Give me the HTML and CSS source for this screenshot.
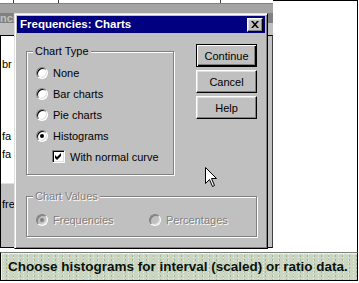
FILE: index.html
```html
<!DOCTYPE html>
<html lang="en">
<head>
    <meta charset="UTF-8">
    <meta name="viewport" content="width=device-width, initial-scale=1.0">
    <title>Frequencies: Charts</title>
    <link rel="stylesheet" href="styles.css">
</head>
<body>
    <div class="screen">
        <div class="desk">
            <div class="datawin">
                <div class="dw-ruler"></div>
                <div class="dw-edge"></div>
                <div class="dw-frame"></div>
                <div class="dw-title">nci</div>
                <div class="dw-menu"></div>
                <div class="dw-body">
                    <div class="dw-rows">
                        <div class="dw-cells">
                            <div class="cell"></div>
                            <div class="cell">br</div>
                            <div class="cell"></div>
                            <div class="cell"></div>
                            <div class="cell"></div>
                            <div class="cell">fa</div>
                            <div class="cell">fa</div>
                        </div>
                        <div class="dw-pane">
                            <div class="cell">fre</div>
                        </div>
                    </div>
                    <div class="dw-grid"></div>
                    <div class="dw-scroll"></div>
                </div>
            </div>
            <div class="outwin"></div>

            <div class="dialog">
                <div class="titlebar">
                    <span class="title-text">Frequencies: Charts</span>
                    <span class="close-btn">
                        <svg width="8" height="7" viewBox="0 0 8 7"><path d="M0 0h2l2 2.3L6 0h2L5 3.5 8 7H6L4 4.7 2 7H0l3-3.5z" fill="#000"/></svg>
                    </span>
                </div>
                <div class="dlg-body">
                    <div class="top-row">
                        <div class="group chart-type">
                            <span class="caption">Chart Type</span>
                            <div class="opt"><span class="radio"></span>None</div>
                            <div class="opt"><span class="radio"></span>Bar charts</div>
                            <div class="opt"><span class="radio"></span>Pie charts</div>
                            <div class="opt"><span class="radio checked"></span>Histograms</div>
                            <div class="opt sub">
                                <span class="check">
                                    <svg width="9" height="9" viewBox="0 0 9 9"><path d="M1 3l2 2 4-4v3L3 8 1 6z" fill="#000"/></svg>
                                </span>With normal curve
                            </div>
                        </div>
                        <div class="buttons">
                            <button class="btn btn-default" type="button">Continue</button>
                            <button class="btn" type="button">Cancel</button>
                            <button class="btn" type="button">Help</button>
                        </div>
                    </div>
                    <div class="group chart-values">
                        <span class="caption disabled">Chart Values</span>
                        <div class="opt disabled"><span class="radio checked off"></span>Frequencies</div>
                        <div class="opt disabled"><span class="radio off"></span>Percentages</div>
                    </div>
                </div>
                <svg class="pointer" width="13" height="21" viewBox="0 0 13 21">
                    <path d="M0.5 0.5V16.5L4.5 12.5L7.5 19.5L9.5 18.5L6.5 11.5H11.5Z" fill="#fff" stroke="#000"/>
                </svg>
            </div>
        </div>
        <div class="status">Choose histograms for interval (scaled) or ratio data.</div>
    </div>
</body>
</html>
```
FILE: styles.css
```css
body { margin: 0; background: #fff; font-family: "Liberation Sans", Arial, sans-serif; font-size: 11px; color: #000; }
.screen { width: 358px; }
.desk { position: relative; display: flex; height: 252px; }

/* data editor window behind the dialog */
.datawin { width: 273px; height: 248px; display: flex; flex-direction: column; }
.dw-ruler {
    height: 3px;
    background-color: #fff;
    background-image: linear-gradient(#404040, #404040), linear-gradient(#404040, #404040), linear-gradient(#404040, #404040);
    background-size: 1px 3px;
    background-position: 13px 0, 58px 0, 220px 0;
    background-repeat: no-repeat;
}
.dw-edge { height: 1px; background: #808080; }
.dw-frame { height: 9px; background: #a4a4a4; }
.dw-title { height: 10px; line-height: 10px; background: #808080; color: #c0c0c0; font-weight: bold; overflow: hidden; }
.dw-menu { height: 12px; background: #c0c0c0; }
.dw-body { flex: 1; display: flex; border: 1px solid #000; border-right-color: #404040; }
.dw-rows { width: 13px; display: flex; flex-direction: column; }
.dw-cells { height: 146px; padding-top: 1px; background: #fff; border-bottom: 1px solid #dfdfdf; }
.dw-pane { flex: 1; padding-top: 11px; background: #c0c0c0; }
.cell { height: 18px; line-height: 18px; padding-left: 1px; white-space: nowrap; }
.dw-grid { flex: 1; background: #fff; }
.dw-scroll { width: 4px; background: #c0c0c0; }
.outwin { width: 84px; border-top: 1px solid #000; border-right: 1px solid #000; background: #fff; }

/* dialog */
.dialog {
    position: absolute;
    left: 14px;
    top: 13px;
    width: 254px;
    height: 236px;
    box-sizing: border-box;
    padding: 2px;
    background: #c0c0c0;
    border: 1px solid;
    border-color: #dfdfdf #000 #000 #dfdfdf;
    box-shadow: inset 1px 1px 0 #fff, inset -1px -1px 0 #808080;
}
.titlebar { height: 17px; display: flex; align-items: center; padding: 0 0 2px 3px; box-sizing: border-box; background: #000080; }
.title-text { color: #fff; font-weight: bold; font-size: 11.5px; }
.close-btn {
    width: 16px;
    height: 14px;
    box-sizing: border-box;
    margin: 2px 2px 0 auto;
    display: flex;
    align-items: center;
    justify-content: center;
    background: #c0c0c0;
    border: 1px solid;
    border-color: #fff #000 #000 #fff;
    box-shadow: inset -1px -1px 0 #808080, inset 1px 1px 0 #dfdfdf;
}
.dlg-body { padding: 11px 0 0 9px; }
.top-row { display: flex; align-items: flex-start; }

.group { position: relative; box-sizing: border-box; border: 1px solid #808080; box-shadow: 1px 1px 0 #fff, inset 1px 1px 0 #fff; }
.caption { position: absolute; top: -7px; left: 6px; padding: 0 2px; line-height: 13px; background: #c0c0c0; }
.chart-type { width: 148px; height: 124px; margin-top: 7px; padding: 10px 0 7px 9px; }
.chart-values { width: 231px; height: 41px; margin-top: 21px; padding: 12px 0 6px 9px; display: grid; grid-template-columns: 113px auto; }

.opt { display: flex; align-items: center; gap: 5px; height: 21px; white-space: nowrap; }
.opt.sub { padding-left: 16px; }
.disabled { color: #808080; text-shadow: 1px 1px 0 #fff; }

.radio {
    position: relative;
    width: 12px;
    height: 12px;
    box-sizing: border-box;
    border-radius: 50%;
    background: #fff;
    border: 1px solid;
    border-color: #808080 #fff #fff #808080;
    box-shadow: inset 1px 1px 0 #000, inset -1px -1px 0 #dfdfdf;
}
.radio.checked::after { content: ""; position: absolute; left: 3px; top: 3px; width: 4px; height: 4px; border-radius: 50%; background: #000; }
.radio.off { background: #c0c0c0; box-shadow: inset 1px 1px 0 #808080, inset -1px -1px 0 #dfdfdf; }
.radio.off::after { background: #808080; }
.check {
    width: 13px;
    height: 13px;
    box-sizing: border-box;
    display: flex;
    align-items: center;
    justify-content: center;
    background: #fff;
    border: 1px solid;
    border-color: #808080 #fff #fff #808080;
    box-shadow: inset 1px 1px 0 #000, inset -1px -1px 0 #dfdfdf;
}

.buttons { display: flex; flex-direction: column; gap: 3px; margin-left: 22px; }
.btn {
    width: 61px;
    height: 23px;
    box-sizing: border-box;
    padding: 0;
    font: inherit;
    color: #000;
    background: #c0c0c0;
    border: 1px solid;
    border-color: #fff #000 #000 #fff;
    box-shadow: inset -1px -1px 0 #808080, inset 1px 1px 0 #dfdfdf;
}
.btn-default { border-color: #000; box-shadow: inset 1px 1px 0 #fff, inset -1px -1px 0 #000, inset -2px -2px 0 #808080; }

.pointer { position: absolute; left: 190px; top: 153px; }

/* caption bar under the screenshot */
.status {
    height: 29px;
    box-sizing: border-box;
    padding-left: 7px;
    border: 1px solid #000;
    border-top-color: #808080;
    box-shadow: inset 1px 1px 0 #eef3ea;
    background-color: #cad6c2;
    background-image: radial-gradient(circle, rgba(255,255,255,.6) 0.6px, transparent 1px), radial-gradient(circle, rgba(80,110,70,.3) 0.6px, transparent 1px);
    background-size: 5px 3px, 7px 4px;
    background-position: 0 0, 2px 1px;
    color: #0a120a;
    font-weight: bold;
    font-size: 13.5px;
    line-height: 27px;
    white-space: nowrap;
}
```
